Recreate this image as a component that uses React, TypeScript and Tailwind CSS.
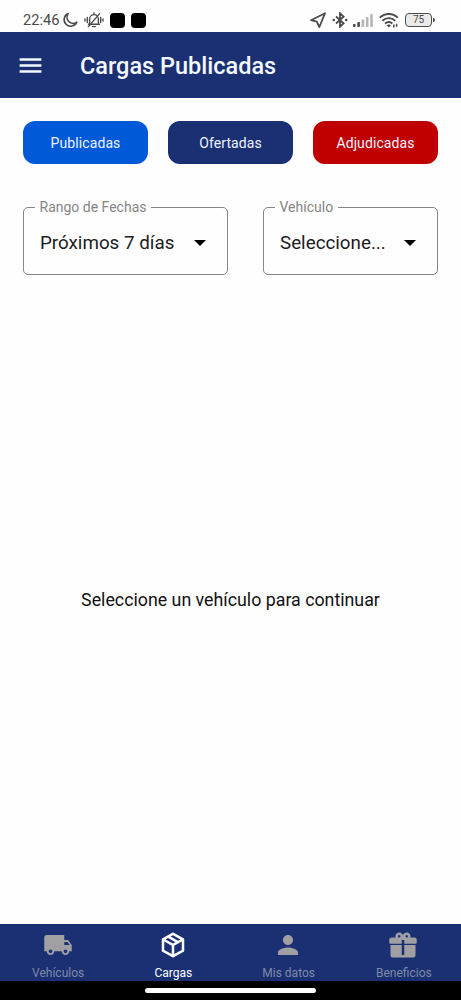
import { MdLocalShipping, MdMenu, MdPerson } from "react-icons/md";
import type { ReactNode } from "react";

function StatusBar() {
  return (
    <div className="flex h-8 shrink-0 items-center pt-2 pr-[26px] pl-[23px] text-[#4a4a4a]">
      <span className="w-[37px] text-[14.6px] leading-4 whitespace-nowrap">22:46</span>
      <svg className="ml-[2px] size-4" viewBox="0 0 16 16" fill="none" aria-hidden="true">
        <path
          d="M6.2 1.5A6.6 6.6 0 1 0 14.8 10.2A6.2 6.2 0 0 1 6.2 1.5Z"
          stroke="currentColor"
          strokeWidth="1.6"
          strokeLinejoin="round"
        />
      </svg>
      <svg className="ml-[6px] h-4 w-5" viewBox="0 0 20 16" fill="none" aria-hidden="true">
        <g stroke="currentColor" strokeWidth="1.4" strokeLinecap="round">
          <path d="M4.5 12.2H15.5M5.6 11.6V7A4.4 4.4 0 0 1 14.4 7V11.6M8.6 14.6H11.4M10 1V2.4" />
          <path d="M3.3 5.5V10.5M1 7V9M16.7 5.5V10.5M19 7V9" />
          <path d="M15.6 1.6L4.4 14.6" />
        </g>
      </svg>
      <span className="ml-[6px] size-[15px] rounded-[4px] bg-black" />
      <span className="ml-[6px] size-[15px] rounded-[4px] bg-black" />

      <svg className="ml-auto size-4" viewBox="0 0 16 16" fill="none" aria-hidden="true">
        <path
          d="M15 1.2L1 8.2L6.8 9.6L9.4 15Z"
          stroke="currentColor"
          strokeWidth="1.8"
          strokeLinejoin="round"
        />
      </svg>
      <svg className="ml-[6px] h-4 w-4" viewBox="0 0 16 16" fill="none" aria-hidden="true">
        <path d="M4 4.5L11.6 11.2L8 14.8V1.2L11.6 4.8L4 11.5" stroke="currentColor" strokeWidth="1.8" />
        <circle cx="1.8" cy="8" r="1.3" fill="currentColor" />
        <circle cx="14.2" cy="8" r="1.3" fill="currentColor" />
      </svg>
      <svg className="ml-[5px] h-4 w-5" viewBox="0 0 20 16" fill="currentColor" aria-hidden="true">
        <rect x="0" y="12" width="2.6" height="3" rx=".8" />
        <rect x="4.3" y="10" width="2.6" height="5" rx=".8" />
        <g opacity=".4">
          <rect x="8.6" y="7.5" width="2.6" height="7.5" rx=".8" />
          <rect x="12.9" y="5" width="2.6" height="10" rx=".8" />
          <rect x="17.2" y="2" width="2.6" height="13" rx=".8" />
        </g>
      </svg>
      <svg className="ml-[6px] h-4 w-5" viewBox="0 0 20 16" fill="none" aria-hidden="true">
        <g stroke="currentColor" strokeWidth="1.9">
          <path d="M.8 5.6C6 .8 13.6 .8 18.8 5.6" />
          <path d="M3.4 8.7C7.2 5.3 12.4 5.3 16.2 8.7" />
          <path d="M6 11.6C8.3 9.7 11.3 9.7 13.4 11.5" />
        </g>
        <path d="M7.6 13.2Q9.8 11.8 12 13.2L9.8 15.4Z" fill="currentColor" />
        <path d="M14.8 12.5V15.4M17.6 11.8V14.7" stroke="currentColor" strokeWidth="1.5" />
      </svg>
      <div className="ml-[6px] flex h-[14px] w-[27px] items-center justify-center rounded-[4px] border-[1.5px] border-current bg-[#eaeaea] text-[10px] leading-none">
        75
      </div>
      <span className="ml-px h-1 w-[2px] rounded-r bg-current" />
    </div>
  );
}

function FilterButton({ label, className }: { label: string; className: string }) {
  return (
    <button
      type="button"
      className={`h-[43px] flex-1 rounded-[12px] pt-px text-[14px] tracking-[0.1px] text-[#eef3ff] ${className}`}
    >
      {label}
    </button>
  );
}

function SelectField({ label, value, className }: { label: string; value: string; className: string }) {
  return (
    <fieldset
      className={`h-[76px] min-w-0 rounded-[5px] border border-[#868686] pr-[21px] pl-[11px] ${className}`}
    >
      <legend className="pr-[5px] pl-[4.5px] text-[14px] leading-4 whitespace-nowrap text-[#858585]">
        {label}
      </legend>
      <div className="flex h-[55px] items-center justify-between pl-[5px]">
        <span className="text-[18.8px] leading-6 whitespace-nowrap text-[#1c1b1f]">{value}</span>
        <svg className="h-[6px] w-[12px] shrink-0" viewBox="0 0 12 6" aria-hidden="true">
          <path d="M0 0H12L6 6Z" />
        </svg>
      </div>
    </fieldset>
  );
}

function TabItem({ label, active, children }: { label: string; active?: boolean; children: ReactNode }) {
  return (
    <a
      href="#"
      className={`flex flex-1 flex-col items-center pt-[6px] ${active ? "text-white" : "text-[#a0a0a4]"}`}
    >
      {children}
      <span className={`mt-[5px] pl-px text-[12px] leading-4 ${active ? "" : "text-[#7f8aa6]"}`}>
        {label}
      </span>
    </a>
  );
}

export default function App() {
  return (
    <div className="flex h-screen w-full flex-col overflow-hidden bg-[#fefefe] font-[Roboto,sans-serif]">
      <StatusBar />

      <header className="flex h-[66px] shrink-0 items-center bg-[#1a3073] pl-[16px] text-[#f4f8ff]">
        <MdMenu className="size-[29px]" />
        <h1 className="ml-[35px] pt-[3px] text-[23.5px] font-medium">Cargas Publicadas</h1>
      </header>

      <main className="flex flex-1 flex-col px-[23px]">
        <div className="mt-[23px] flex gap-[20px]">
          <FilterButton label="Publicadas" className="bg-[#0059d9]" />
          <FilterButton label="Ofertadas" className="bg-[#1a3073]" />
          <FilterButton label="Adjudicadas" className="bg-[#c00000]" />
        </div>

        <div className="mt-[35px] flex justify-between">
          <SelectField label="Rango de Fechas" value="Próximos 7 días" className="w-[205px]" />
          <SelectField label="Vehículo" value="Seleccione..." className="w-[175px]" />
        </div>

        <div className="flex flex-1 items-center justify-center pt-[2px]">
          <p className="text-[17.8px] whitespace-nowrap text-[#111]">
            Seleccione un vehículo para continuar
          </p>
        </div>
      </main>

      <nav className="flex h-[57px] shrink-0 bg-[#1a3073]">
        <TabItem label="Vehículos">
          <MdLocalShipping className="size-[30px] shrink-0" />
        </TabItem>
        <TabItem label="Cargas" active>
          <svg className="size-[30px] shrink-0" viewBox="0 0 24 24" fill="currentColor" aria-hidden="true">
            <path d="M21,16.5C21,16.88 20.79,17.21 20.47,17.38L12.57,21.82C12.41,21.94 12.21,22 12,22C11.79,22 11.59,21.94 11.43,21.82L3.53,17.38C3.21,17.21 3,16.88 3,16.5V7.5C3,7.12 3.21,6.79 3.53,6.62L11.43,2.18C11.59,2.06 11.79,2 12,2C12.21,2 12.41,2.06 12.57,2.18L20.47,6.62C20.79,6.79 21,7.12 21,7.5V16.5M12,4.15L10.11,5.22L16,8.61L17.96,7.5L12,4.15M6.04,7.5L12,10.85L13.96,9.75L8.08,6.35L6.04,7.5M5,15.91L11,19.29V12.58L5,9.21V15.91M19,15.91V9.21L13,12.58V19.29L19,15.91Z" />
          </svg>
        </TabItem>
        <TabItem label="Mis datos">
          <MdPerson className="size-[30px] shrink-0" />
        </TabItem>
        <TabItem label="Beneficios">
          <svg className="size-[30px] shrink-0" viewBox="0 0 24 24" fill="currentColor" aria-hidden="true">
            <path d="M9.06,1.93C7.17,1.92 5.33,3.74 6.17,6H3A2,2 0 0,0 1,8V10A1,1 0 0,0 2,11H11V8H13V11H22A1,1 0 0,0 23,10V8A2,2 0 0,0 21,6H17.83C19,2.73 14.6,.42 12.57,3.24L12,4L11.43,3.22C10.8,2.33 9.93,1.94 9.06,1.93M9,4C9.89,4 10.34,5.08 9.71,5.71C9.08,6.34 8,5.89 8,5A1,1 0 0,1 9,4M15,4C15.89,4 16.34,5.08 15.71,5.71C15.08,6.34 14,5.89 14,5A1,1 0 0,1 15,4M2,12V20A2,2 0 0,0 4,22H20A2,2 0 0,0 22,20V12H13V20H11V12H2Z" />
          </svg>
        </TabItem>
      </nav>

      {/* System gesture bar */}
      <div className="flex h-[19px] shrink-0 justify-center bg-black pt-[7px]">
        <span className="h-[5px] w-[171px] rounded-full bg-white" />
      </div>
    </div>
  );
}
